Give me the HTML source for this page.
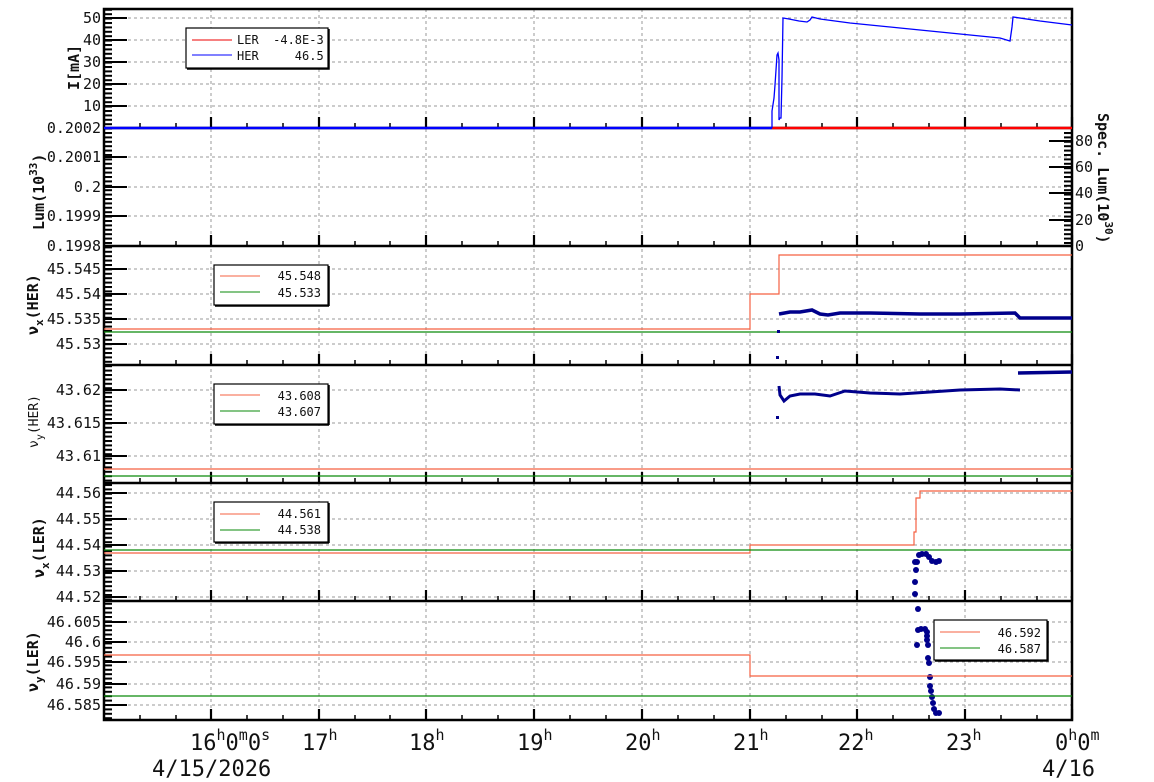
<!DOCTYPE html>
<html><head><meta charset="utf-8"><style>
html,body{margin:0;padding:0;background:#fff;width:1154px;height:782px;overflow:hidden}
svg{display:block}
text{font-family:"DejaVu Sans Mono","Liberation Mono",monospace;fill:#111}
.t{font-size:15px}
.lg{font-size:12px;white-space:pre}
.ax{font-size:15px;font-weight:bold}
.xl{font-size:22px}
</style></head><body>
<svg width="1154" height="782" viewBox="0 0 1154 782">
<defs>
<pattern id="mt" x="104" y="0" width="8" height="4.4" patternUnits="userSpaceOnUse"><rect x="0" y="0" width="8" height="2" fill="#000"/></pattern>
<pattern id="mtr" x="1064" y="0" width="8" height="4.4" patternUnits="userSpaceOnUse"><rect x="0" y="0" width="8" height="2" fill="#000"/></pattern>
</defs>
<g stroke="#999" stroke-width="1" stroke-dasharray="3,3">
<path d="M211 9V720M319 9V720M426 9V720M534 9V720M642 9V720M750 9V720M857 9V720M965 9V720"/>
<path d="M104 18H1072M104 40H1072M104 62H1072M104 84H1072M104 106H1072"/>
<path d="M104 157H1072M104 187H1072M104 216H1072"/>
<path d="M104 269H1072M104 294H1072M104 319H1072M104 344H1072"/>
<path d="M104 390H1072M104 423H1072M104 456H1072"/>
<path d="M104 493H1072M104 519H1072M104 545H1072M104 571H1072M104 597H1072"/>
<path d="M104 622H1072M104 642H1072M104 662H1072M104 684H1072M104 705H1072"/>
</g>
<rect x="104" y="10" width="8" height="710" fill="url(#mt)"/>
<rect x="1064" y="130" width="8" height="116" fill="url(#mtr)"/>
<g stroke="#000" stroke-width="2">
<path d="M104 18h23M104 40h23M104 62h23M104 84h23M104 106h23"/>
<path d="M104 157h23M104 187h23M104 216h23"/>
<path d="M104 269h23M104 294h23M104 319h23M104 344h23"/>
<path d="M104 390h23M104 423h23M104 456h23"/>
<path d="M104 493h23M104 519h23M104 545h23M104 571h23M104 597h23"/>
<path d="M104 622h23M104 642h23M104 662h23M104 684h23M104 705h23"/>
<path d="M1072 141h-23M1072 167h-23M1072 193h-23M1072 220h-23"/>
</g>
<g stroke="#000" stroke-width="2.2">
<path id="ht" d="M211 128v-11M319 128v-11M426 128v-11M534 128v-11M642 128v-11M750 128v-11M857 128v-11M965 128v-11M1072 128v-11"/>
<use href="#ht" y="118"/><use href="#ht" y="237"/><use href="#ht" y="355"/><use href="#ht" y="473"/><use href="#ht" y="592"/>
</g>
<g stroke="#000" stroke-width="1.5">
<path id="mnt" d="M140 128v-5M176 128v-5M247 128v-5M283 128v-5M355 128v-5M390 128v-5M462 128v-5M498 128v-5M570 128v-5M606 128v-5M678 128v-5M714 128v-5M786 128v-5M822 128v-5M893 128v-5M929 128v-5M1001 128v-5M1037 128v-5"/>
<use href="#mnt" y="118"/><use href="#mnt" y="237"/><use href="#mnt" y="355"/><use href="#mnt" y="473"/><use href="#mnt" y="592"/>
</g>
<g stroke="#000" stroke-width="2.5" fill="none">
<rect x="104" y="9" width="968" height="711"/>
<path d="M104 128H1072M104 246H1072M104 365H1072M104 483H1072M104 601H1072"/>
</g>
<path d="M104 128H772" stroke="#00f" stroke-width="2.5" fill="none"/>
<path d="M772 128H1072" stroke="#f00" stroke-width="2.5" fill="none"/>
<path d="M772 128V111L774 98L775 85L776 70L777 55L778 53L779 60V120L780 118H781L782 78L783 18L789 19L799 21L807 22L810 20L812 17L820 19L850 23L900 28L950 33L1000 38L1010 41L1012 27L1013 17L1040 21L1072 25" stroke="#00f" stroke-width="1.3" fill="none"/>
<path d="M104 329H750V294H779V255H1072" stroke="#f56042" stroke-width="1.2" fill="none"/>
<path d="M104 332H1072" stroke="#0a8a0a" stroke-width="1.2"/>
<path d="M779 314L790 312L800 312L812 310L820 314L828 315L840 313L870 313L920 314L960 314L1015 313L1020 318L1072 318" stroke="#00008b" stroke-width="3.5" fill="none"/>
<rect x="777" y="330" width="3" height="3" fill="#00008b"/><rect x="776" y="356" width="3" height="3" fill="#00008b"/>
<path d="M104 469H1072" stroke="#f56042" stroke-width="1.2"/>
<path d="M104 476H1072" stroke="#0a8a0a" stroke-width="1.2"/>
<path d="M779 386L780 395L784 401L790 396L800 394L815 394L830 396L845 391L870 393L900 394L930 392L960 390L1000 389L1020 390" stroke="#00008b" stroke-width="3" fill="none"/>
<path d="M1018 373L1072 372" stroke="#00008b" stroke-width="3.5" fill="none"/>
<rect x="776" y="416" width="3" height="3" fill="#00008b"/>
<path d="M104 553H750V545H914V532L916 532V498H920V491H1072" stroke="#f56042" stroke-width="1.2" fill="none"/>
<path d="M104 550H1072" stroke="#0a8a0a" stroke-width="1.2"/>
<g fill="#00008b">
<circle cx="919" cy="555" r="3"/><circle cx="922" cy="554" r="3"/><circle cx="926" cy="554" r="3"/><circle cx="929" cy="557" r="3"/><circle cx="932" cy="561" r="3"/><circle cx="936" cy="562" r="3"/><circle cx="939" cy="561" r="3"/>
<circle cx="917" cy="562" r="3"/><circle cx="915" cy="562" r="3"/><circle cx="916" cy="570" r="3"/><circle cx="915" cy="582" r="3"/><circle cx="915" cy="594" r="3"/>
<circle cx="918" cy="609" r="3"/>
<circle cx="918" cy="630" r="3"/><circle cx="921" cy="629" r="3"/><circle cx="925" cy="629" r="3"/><circle cx="927" cy="632" r="3"/><circle cx="927" cy="636" r="3"/><circle cx="927" cy="640" r="3"/><circle cx="917" cy="645" r="3"/><circle cx="928" cy="645" r="3"/><circle cx="928" cy="658" r="3"/><circle cx="929" cy="663" r="3"/><circle cx="930" cy="677" r="3"/><circle cx="930" cy="686" r="3"/><circle cx="931" cy="691" r="3"/><circle cx="932" cy="697" r="3"/><circle cx="933" cy="703" r="3"/><circle cx="934" cy="709" r="3"/><circle cx="936" cy="713" r="3"/><circle cx="939" cy="713" r="3"/>
</g>
<path d="M104 655H750V676H1072" stroke="#f56042" stroke-width="1.2" fill="none"/>
<path d="M104 696H1072" stroke="#0a8a0a" stroke-width="1.2"/>
<g stroke="#000" stroke-width="1.2" fill="#fff">
<rect x="186" y="28" width="142" height="40"/>
<rect x="214" y="265" width="114" height="40"/>
<rect x="214" y="384" width="114" height="40"/>
<rect x="214" y="502" width="114" height="40"/>
<rect x="934" y="620" width="113" height="40"/>
</g>
<g stroke="#000" stroke-width="1.5" fill="none"><path d="M329 29V69H187M329 306V266M329 306H215M329 425V385M329 425H215M329 543V503M329 543H215M1048 621V661H935"/></g>
<path d="M192 40H232" stroke="#e00" stroke-width="1"/><path d="M192 55H232" stroke="#00f" stroke-width="1"/>
<text class="lg" x="237" y="44" xml:space="preserve">LER  -4.8E-3</text>
<text class="lg" x="237" y="60" xml:space="preserve">HER     46.5</text>
<g stroke-width="1">
<path d="M220 276H260" stroke="#f56042"/><path d="M220 292H260" stroke="#0a8a0a"/>
<path d="M220 395H260" stroke="#f56042"/><path d="M220 411H260" stroke="#0a8a0a"/>
<path d="M220 514H260" stroke="#f56042"/><path d="M220 530H260" stroke="#0a8a0a"/>
<path d="M940 632H980" stroke="#f56042"/><path d="M940 648H980" stroke="#0a8a0a"/>
</g>
<g class="lg" text-anchor="end">
<text x="321" y="280">45.548</text><text x="321" y="297">45.533</text>
<text x="321" y="400">43.608</text><text x="321" y="416">43.607</text>
<text x="321" y="518">44.561</text><text x="321" y="534">44.538</text>
<text x="1041" y="637">46.592</text><text x="1041" y="653">46.587</text>
</g>
<g class="t" text-anchor="end">
<text x="101" y="23">50</text><text x="101" y="45">40</text><text x="101" y="67">30</text><text x="101" y="89">20</text><text x="101" y="111">10</text>
<text x="101" y="133">0.2002</text><text x="101" y="162">0.2001</text><text x="101" y="192">0.2</text><text x="101" y="221">0.1999</text><text x="101" y="251">0.1998</text>
<text x="101" y="274">45.545</text><text x="101" y="299">45.54</text><text x="101" y="324">45.535</text><text x="101" y="349">45.53</text>
<text x="101" y="395">43.62</text><text x="101" y="428">43.615</text><text x="101" y="461">43.61</text>
<text x="101" y="498">44.56</text><text x="101" y="524">44.55</text><text x="101" y="550">44.54</text><text x="101" y="576">44.53</text><text x="101" y="602">44.52</text>
<text x="101" y="627">46.605</text><text x="101" y="647">46.6</text><text x="101" y="667">46.595</text><text x="101" y="689">46.59</text><text x="101" y="710">46.585</text>
</g>
<g class="t"><text x="1075" y="146">80</text><text x="1075" y="172">60</text><text x="1075" y="198">40</text><text x="1075" y="225">20</text><text x="1075" y="251">0</text></g>
<text class="ax" transform="translate(79,90) rotate(-90)">I[mA]</text>
<text class="ax" transform="translate(44,230) rotate(-90)">Lum(10<tspan dy="-7" font-size="11">33</tspan><tspan dy="7">)</tspan></text>
<text class="ax" transform="translate(1098,113) rotate(90)">Spec. Lum(10<tspan dy="-7" font-size="11">30</tspan><tspan dy="7">)</tspan></text>
<text class="ax" transform="translate(38,335) rotate(-90)">ν<tspan dy="5" font-size="11">x</tspan><tspan dy="-5">(HER)</tspan></text>
<text transform="translate(38,448) rotate(-90)" style="font-size:13px">ν<tspan dy="5" font-size="10">y</tspan><tspan dy="-5">(HER)</tspan></text>
<text class="ax" transform="translate(44,578) rotate(-90)">ν<tspan dy="5" font-size="11">x</tspan><tspan dy="-5">(LER)</tspan></text>
<text class="ax" transform="translate(38,692) rotate(-90)">ν<tspan dy="5" font-size="11">y</tspan><tspan dy="-5">(LER)</tspan></text>
<g class="xl">
<text x="190" y="750">16<tspan dy="-10" font-size="15">h</tspan><tspan dy="10">0</tspan><tspan dy="-10" font-size="15">m</tspan><tspan dy="10">0</tspan><tspan dy="-10" font-size="15">s</tspan></text>
<text x="302" y="750">17<tspan dy="-10" font-size="15">h</tspan></text>
<text x="409" y="750">18<tspan dy="-10" font-size="15">h</tspan></text>
<text x="517" y="750">19<tspan dy="-10" font-size="15">h</tspan></text>
<text x="625" y="750">20<tspan dy="-10" font-size="15">h</tspan></text>
<text x="733" y="750">21<tspan dy="-10" font-size="15">h</tspan></text>
<text x="838" y="750">22<tspan dy="-10" font-size="15">h</tspan></text>
<text x="946" y="750">23<tspan dy="-10" font-size="15">h</tspan></text>
<text x="1055" y="750">0<tspan dy="-10" font-size="15">h</tspan><tspan dy="10">0</tspan><tspan dy="-10" font-size="15">m</tspan></text>
<text x="152" y="776">4/15/2026</text>
<text x="1042" y="776">4/16</text>
</g>
</svg>
</body></html>
